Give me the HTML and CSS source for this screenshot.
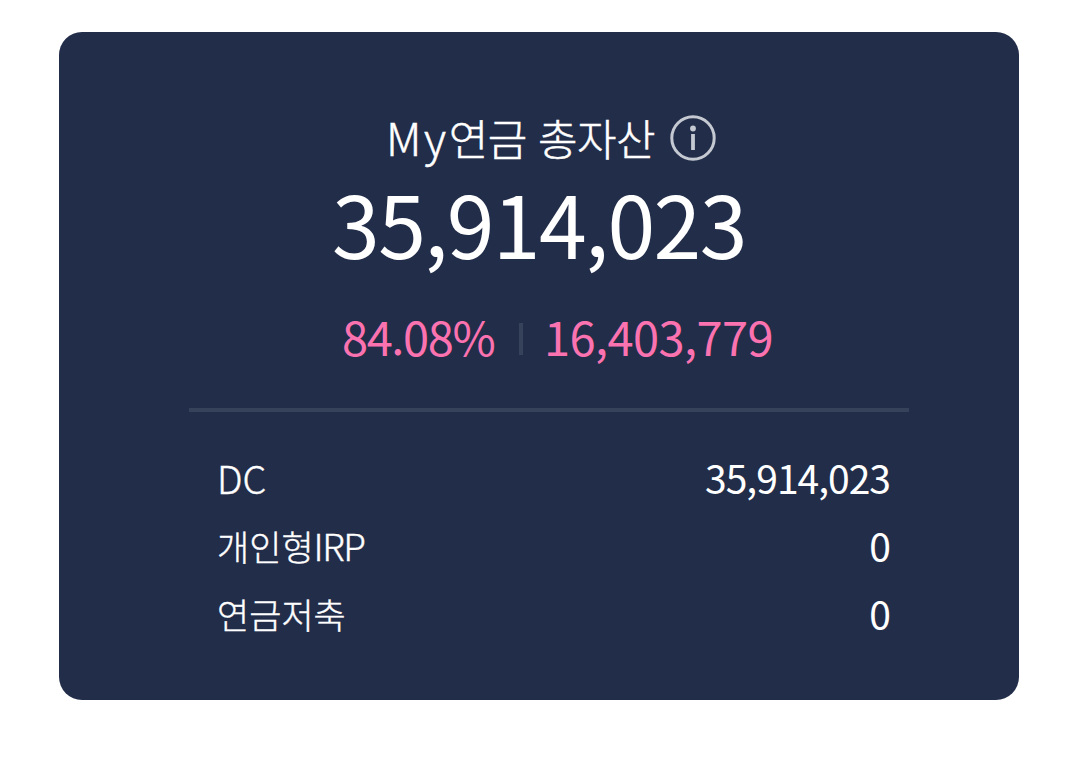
FILE: index.html
```html
<!DOCTYPE html>
<html lang="ko">
<head>
<meta charset="utf-8">
<title>My연금 총자산</title>
<link rel="stylesheet" href="styles.css">
</head>
<body>
<main class="card">
  <header class="title">
    <h1 class="title-text"><span class="latin">My</span>연금 총자산</h1>
    <svg class="info" viewBox="0 0 46 46" fill="none" aria-label="info">
      <circle cx="23" cy="23" r="21.2" stroke="#c5c9d1" stroke-width="3"/>
      <circle cx="23" cy="13.5" r="2.9" fill="#c5c9d1"/>
      <path d="M23 19V35" stroke="#c5c9d1" stroke-width="3.8"/>
    </svg>
  </header>
  <p class="total">35,914,023</p>
  <div class="profit">
    <span class="rate">84.08%</span>
    <span class="bar"></span>
    <span class="gain">16,403,779</span>
  </div>
  <hr class="divider">
  <dl class="accounts">
    <div class="row"><dt class="dc">DC</dt><dd>35,914,023</dd></div>
    <div class="row"><dt>개인형<span class="irp">IRP</span></dt><dd>0</dd></div>
    <div class="row"><dt>연금저축</dt><dd>0</dd></div>
  </dl>
</main>
</body>
</html>
```
FILE: styles.css
```css
* { box-sizing: border-box; margin: 0; padding: 0; }
body {
  background: #fff;
  font-family: "Noto Sans CJK KR", sans-serif;
  padding: 32px 60px 0 59px;
}
.card {
  width: 960px;
  height: 668px;
  border-radius: 23px;
  background: #222d49;
  color: #fff;
  padding-top: 80px;
  white-space: nowrap;
}
.title {
  display: flex;
  align-items: center;
  height: 52px;
  padding-left: 327px;
}
.title-text {
  width: 284px;
  margin-bottom: 4px;
  font-size: 43px;
  line-height: 44px;
  font-weight: 300;
  letter-spacing: -0.6px;
  -webkit-text-stroke: 0.5px #fff;
}
.latin { font-size: 45px; line-height: 1; letter-spacing: 2.6px; }
.info { width: 46px; height: 46px; }
.total {
  margin-top: 20px;
  padding-left: 273px;
  font-size: 86px;
  line-height: 76px;
  font-weight: 400;
  letter-spacing: -1.6px;
}
.profit {
  display: flex;
  align-items: center;
  height: 60px;
  margin-top: 46px;
  padding-left: 283px;
  color: #fb72b0;
  font-size: 47px;
  line-height: 60px;
  letter-spacing: -0.6px;
}
.rate { width: 177px; letter-spacing: -1.4px; }
.bar { width: 4px; height: 32px; margin-top: 6px; background: #36415a; }
.gain { margin-left: 21px; }
.divider {
  width: 720px;
  height: 4px;
  margin: 42px 0 0 130px;
  border: 0;
  background: #36415a;
}
.accounts { width: 673px; margin: 32px 0 0 158px; }
.row {
  display: flex;
  justify-content: space-between;
  height: 68px;
  line-height: 68px;
}
dt { font-size: 35px; line-height: 67px; font-weight: 300; -webkit-text-stroke: 0.4px #fff; }
dd { font-size: 39px; line-height: 66px; font-weight: 400; letter-spacing: -1px; }
.dc { font-size: 38px; }
.irp { font-size: 37px; letter-spacing: -1.4px; }
```
